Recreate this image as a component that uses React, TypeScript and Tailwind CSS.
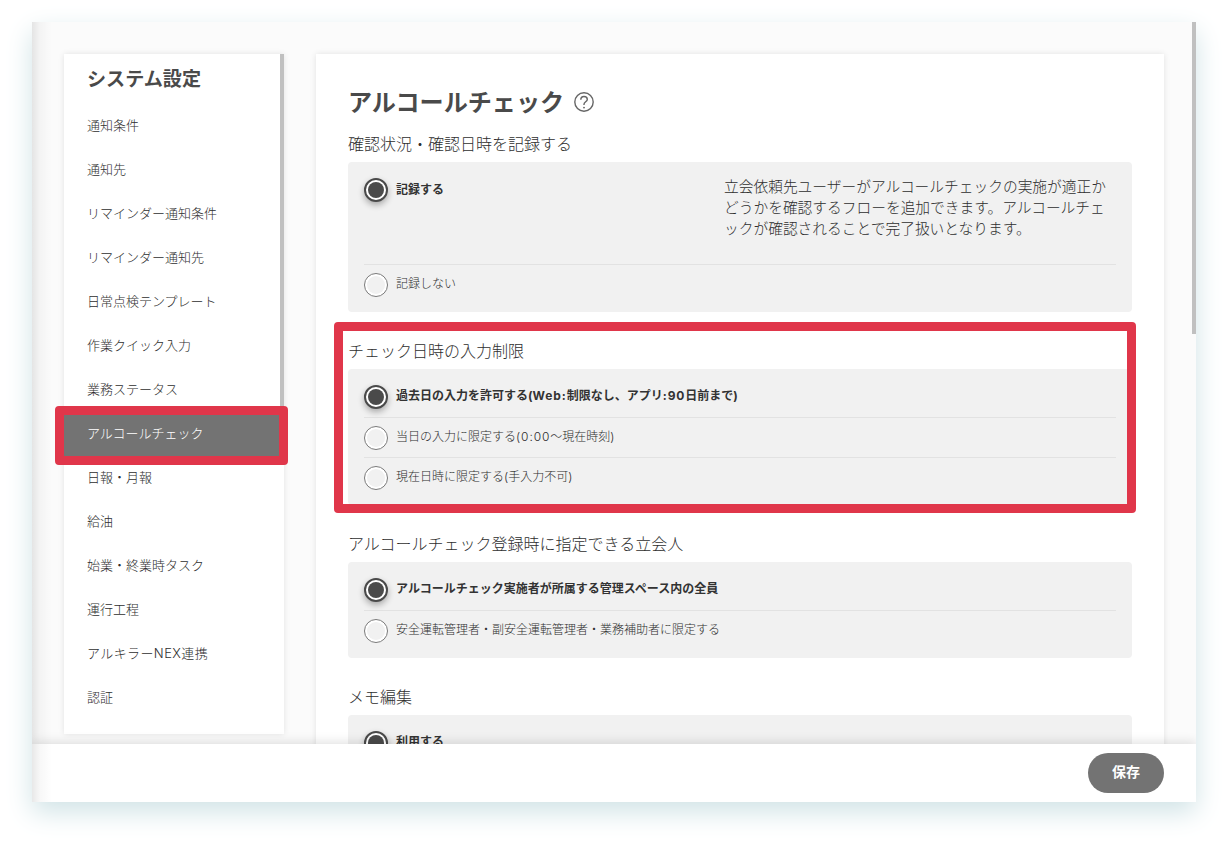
import clsx from "clsx";
import type { ReactNode } from "react";

const MENU = [
  "通知条件",
  "通知先",
  "リマインダー通知条件",
  "リマインダー通知先",
  "日常点検テンプレート",
  "作業クイック入力",
  "業務ステータス",
  "アルコールチェック",
  "日報・月報",
  "給油",
  "始業・終業時タスク",
  "運行工程",
  "アルキラーNEX連携",
  "認証",
];

const ACTIVE = "アルコールチェック";

function Sidebar() {
  return (
    <aside className="relative flex h-[680px] w-[220px] shrink-0 flex-col bg-white pt-[12px] shadow-[0_0_6px_rgba(0,0,0,0.1)]">
      <h2 className="h-[38px] pl-[23px] text-[19.1px] leading-[26px] font-bold whitespace-nowrap">システム設定</h2>
      <ul>
        {MENU.map((label) => (
          <li
            key={label}
            className={clsx(
              "flex h-11 items-center pl-[23px] text-[13px] font-light whitespace-nowrap",
              label === ACTIVE ? "bg-[#737373] text-white" : "text-[#2e2e2e]",
            )}
          >
            {label.includes("NEX") ? <span className="tracking-[0.4px]">{label}</span> : label}
          </li>
        ))}
      </ul>
      {/* scrollbar thumb */}
      <div className="absolute top-0 right-0 h-[356px] w-1 bg-[#c0c0c0]" />
      <div className="absolute top-[352px] -left-[9px] h-[59px] w-[233px] rounded-[4px] border-[9px] border-[#e0364a]" />
    </aside>
  );
}

function Radio({ checked }: { checked?: boolean }) {
  return (
    <span
      className={clsx(
        "flex size-6 shrink-0 items-center justify-center rounded-full bg-white",
        checked
          ? "border-2 border-[#4a4a4a] shadow-[0_3px_6px_rgba(0,0,0,0.3)]"
          : "border border-[#7a7a7a]",
      )}
    >
      <span className={clsx("rounded-full", checked ? "size-4 bg-[#4a4a4a]" : "size-[18px] bg-[#f1f1f1]")} />
    </span>
  );
}

function Option({ checked, last, note, children }: { checked?: boolean; last?: boolean; note?: string; children: ReactNode }) {
  return (
    <div
      className={clsx(
        "flex items-start border-b pt-2",
        note ? "h-[95px]" : "h-[40.5px]",
        last ? "border-transparent" : "border-[#e2e2e2]",
      )}
    >
      <Radio checked={checked} />
      <span
        className={clsx(
          "ml-2 h-[22px] text-[12px] leading-[22px] whitespace-nowrap",
          checked ? "font-bold text-[#333]" : "font-light text-[#2e2e2e]",
          note && "pt-px",
        )}
      >
        {children}
      </span>
      {note && <p className="mt-[-1px] mr-2 ml-auto w-[384px] text-[14.72px] leading-[21px] font-light text-[#2e2e2e]">{note}</p>}
    </div>
  );
}

function Section({ title, children }: { title: string; children: ReactNode }) {
  return (
    <section className="mb-[27px]">
      <h3 className="h-[30px] text-[16px] leading-6 font-light whitespace-nowrap text-[#2e2e2e]">{title}</h3>
      <div className="rounded-[4px] bg-[#f1f1f1] px-4 pt-2 pb-[6.5px]">{children}</div>
    </section>
  );
}

function Wide({ children }: { children: ReactNode }) {
  return <span className="tracking-[0.9px]">{children}</span>;
}

export default function App() {
  return (
    <div className="h-[844px] w-[1228px] overflow-hidden bg-white pt-[22px] pl-8 [font-family:Inter,'Noto_Sans_CJK_JP',sans-serif] text-[#4a4a4a]">
      <div className="relative flex h-[780px] w-[1164px] flex-col bg-[#fbfbfb] shadow-[0_10px_25px_#d0e3e6]">
        <div className="flex h-[722px] items-start gap-8 overflow-hidden pt-8 pl-8">
          <Sidebar />
          <main className="relative h-[760px] w-[848px] shrink-0 bg-white px-8 pt-[31px] shadow-[0_0_6px_rgba(0,0,0,0.1)]">
            <div className="mb-[11px] flex h-9 items-center gap-[9.5px]">
              <h1 className="text-[24.1px] leading-9 font-bold whitespace-nowrap">アルコールチェック</h1>
              <svg viewBox="0 0 20 20" className="mb-[2px] size-5" fill="none" stroke="#666" strokeWidth="1.4">
                <circle cx="10" cy="10" r="9.2" />
                <path d="M6.8 7.7C6.8 5.6 8.2 4.5 10 4.5s3.3 1.1 3.3 2.9c0 2.1-3.3 2.6-3.3 4.8v.9" />
                <circle cx="10" cy="15.6" r="0.95" fill="#666" stroke="none" />
              </svg>
            </div>
            <Section title="確認状況・確認日時を記録する">
              <Option
                checked
                note="立会依頼先ユーザーがアルコールチェックの実施が適正かどうかを確認するフローを追加できます。アルコールチェックが確認されることで完了扱いとなります。"
              >
                記録する
              </Option>
              <Option last>記録しない</Option>
            </Section>
            <Section title="チェック日時の入力制限">
              <Option checked>
                過去日の入力を許可する(<Wide>Web:</Wide>制限なし、アプリ<Wide>:90</Wide>日前まで)
              </Option>
              <Option>
                当日の入力に限定する<Wide>(0:00</Wide>〜現在時刻)
              </Option>
              <Option last>現在日時に限定する(手入力不可)</Option>
            </Section>
            <Section title="アルコールチェック登録時に指定できる立会人">
              <Option checked>アルコールチェック実施者が所属する管理スペース内の全員</Option>
              <Option last>安全運転管理者・副安全運転管理者・業務補助者に限定する</Option>
            </Section>
            <Section title="メモ編集">
              <Option checked>利用する</Option>
            </Section>
            <div className="absolute top-[268px] left-[18px] h-[191px] w-[802px] rounded-[4px] border-[9px] border-[#e0364a]" />
          </main>
        </div>
        <footer className="relative flex h-[58px] items-center justify-end bg-white pr-8 shadow-[0_-2px_10px_rgba(0,0,0,0.12)] [clip-path:inset(-20px_0_0_0)]">
          <button className="h-10 w-[76px] rounded-full bg-[#737373] pb-[3px] text-[14px] font-bold text-white">保存</button>
        </footer>
        <div className="absolute top-0 left-0 h-full w-5 bg-linear-to-r from-black/9 via-black/3 via-40% to-transparent" />
        <div className="absolute top-0 right-0 h-[312px] w-1 bg-[#c0c0c0]" />
      </div>
    </div>
  );
}
